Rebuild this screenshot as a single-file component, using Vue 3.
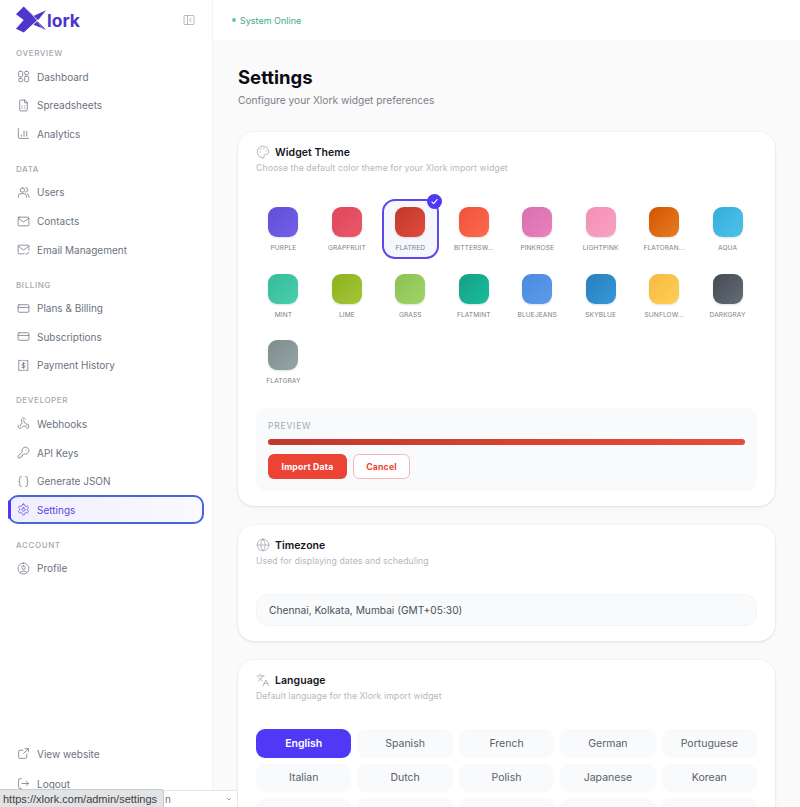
<template>
  <div class="app">
    <aside class="sidebar">
      <div class="brand">
        <svg class="logo" viewBox="0 0 33 28" width="32" height="28">
          <polygon points="1,8 9,0 23,14 9,27 1,23 9,14" fill="#4f35c9" />
          <polygon points="19,10 32,4 24,14" fill="#4f35c9" />
          <polygon points="23,15 32,24 19,19" fill="#4f35c9" />
          <path d="M14 3 30 25" stroke="#c9c4f2" stroke-width=".6" />
        </svg>
        <span class="brand-name">lork</span>
        <svg class="collapse" viewBox="0 0 24 24" width="12" height="12">
          <path v-for="d in icons.collapse" :key="d" :d="d" />
        </svg>
      </div>

      <section v-for="group in nav" :key="group.title" class="group">
        <div class="group-title">{{ group.title }}</div>
        <div v-for="item in group.items" :key="item.label" class="nav-item" :class="{ active: item.active }">
          <svg viewBox="0 0 24 24" width="13" height="13">
            <path v-for="d in icons[item.icon]" :key="d" :d="d" />
          </svg>
          <span>{{ item.label }}</span>
        </div>
      </section>

      <div class="sidebar-bottom">
        <div v-for="item in bottomNav" :key="item.label" class="nav-item">
          <svg viewBox="0 0 24 24" width="13" height="13">
            <path v-for="d in icons[item.icon]" :key="d" :d="d" />
          </svg>
          <span>{{ item.label }}</span>
        </div>
      </div>
    </aside>

    <div class="main">
      <header class="topbar">
        <span class="dot"></span>
        <span>System Online</span>
      </header>

      <div class="content">
        <h1>Settings</h1>
        <p class="subtitle">Configure your Xlork widget preferences</p>

        <section class="card">
          <div class="card-title">
            <svg viewBox="0 0 24 24" width="14" height="14"><path v-for="d in icons.palette" :key="d" :d="d" /></svg>
            <span>Widget Theme</span>
          </div>
          <p class="card-sub">Choose the default color theme for your Xlork import widget</p>

          <div class="themes">
            <div v-for="theme in themes" :key="theme.name" class="theme" :class="{ selected: theme.selected }">
              <div class="swatch" :style="{ background: `linear-gradient(135deg, ${theme.from}, ${theme.to})` }"></div>
              <div class="theme-name">{{ theme.name }}</div>
              <span v-if="theme.selected" class="check">
                <svg viewBox="0 0 24 24" width="9" height="9"><path d="M5 13l4.5 4.5L19 7" /></svg>
              </span>
            </div>
          </div>

          <div class="preview">
            <div class="preview-label">PREVIEW</div>
            <div class="preview-bar"></div>
            <div class="preview-actions">
              <button class="btn-import">Import Data</button>
              <button class="btn-cancel">Cancel</button>
            </div>
          </div>
        </section>

        <section class="card">
          <div class="card-title">
            <svg viewBox="0 0 24 24" width="14" height="14"><path v-for="d in icons.globe" :key="d" :d="d" /></svg>
            <span>Timezone</span>
          </div>
          <p class="card-sub">Used for displaying dates and scheduling</p>
          <div class="select">Chennai, Kolkata, Mumbai (GMT+05:30)</div>
        </section>

        <section class="card">
          <div class="card-title">
            <svg viewBox="0 0 24 24" width="14" height="14"><path v-for="d in icons.languages" :key="d" :d="d" /></svg>
            <span>Language</span>
          </div>
          <p class="card-sub">Default language for the Xlork import widget</p>
          <div class="languages">
            <div v-for="lang in languages" :key="lang" class="lang" :class="{ current: lang === 'English' }">{{ lang }}</div>
            <!-- third row, only its top edge is on screen -->
            <div v-for="n in 5" :key="n" class="lang"></div>
          </div>
        </section>
      </div>
    </div>

    <!-- bar behind the browser's link preview, only its last letter shows -->
    <div class="bottom-select">
      <span class="bottom-label">n</span>
      <svg viewBox="0 0 24 24" width="8" height="8"><path d="M6 9l6 6 6-6" /></svg>
    </div>
    <div class="link-preview">https://xlork.com/admin/settings</div>
  </div>
</template>

<script setup>
const rr = (x, y, w, h, r) =>
  `M${x + r} ${y}h${w - 2 * r}a${r} ${r} 0 0 1 ${r} ${r}v${h - 2 * r}a${r} ${r} 0 0 1 -${r} ${r}h-${w - 2 * r}a${r} ${r} 0 0 1 -${r} -${r}v-${h - 2 * r}a${r} ${r} 0 0 1 ${r} -${r}z`

const icons = {
  collapse: [rr(2, 3, 20, 18, 2), 'M9 3v18', 'M17 8l-4 4 4 4'],
  dashboard: [rr(3, 2.5, 7.5, 10, 2), rr(14, 2.5, 7.5, 6, 2.5), rr(3, 15.5, 7.5, 6, 2.5), rr(14, 11.5, 7.5, 10, 2)],
  sheet: [
    'M14 2H7a2 2 0 0 0-2 2v16a2 2 0 0 0 2 2h10a2 2 0 0 0 2-2V7z',
    'M14 2v5h5',
    'M9 13h.9M14 13h.9M9 17h.9M14 17h.9',
  ],
  chart: ['M2.5 3v16a2 2 0 0 0 2 2h17', 'M8 17v-2', 'M13 17V7', 'M18 17v-9'],
  users: [
    'M10 3.5a4 4 0 1 0 0 8 4 4 0 0 0 0-8z',
    'M2.5 21v-2a5 5 0 0 1 5-5h5a5 5 0 0 1 5 5v2',
    'M16 3.2a4 4 0 0 1 0 8',
    'M19 14.3a5 5 0 0 1 3 4.7v2',
  ],
  mail: [rr(2, 4, 20, 16, 2), 'M2.5 6l9.5 7 9.5-7'],
  mailCheck: ['M22 13V6a2 2 0 0 0-2-2H4a2 2 0 0 0-2 2v12a2 2 0 0 0 2 2h9', 'M2.5 6l9.5 7 9.5-7', 'M16 19l2 2 4-4'],
  card: [rr(2, 5, 20, 14, 2), 'M2 10h20'],
  receipt: [
    'M4 2.5l2 1 2-1 2 1 2-1 2 1 2-1 2 1 2-1v19l-2-1-2 1-2-1-2 1-2-1-2 1-2-1-2 1z',
    'M15 8.5h-4.2a1.7 1.7 0 0 0 0 3.5h2.4a1.7 1.7 0 0 1 0 3.5H9',
    'M12 6.5v11',
  ],
  webhook: [
    'M18 16.98h-5.99c-1.1 0-1.95.94-2.48 1.9A4 4 0 0 1 2 17c.01-.7.2-1.4.57-2',
    'm6 17 3.13-5.78c.53-.97.1-2.18-.5-3.1a4 4 0 1 1 6.89-4.06',
    'm12 6 3.13 5.73C15.66 12.7 16.9 13 18 13a4 4 0 0 1 0 8',
  ],
  key: [
    'M2.586 17.414A2 2 0 0 0 2 18.828V21a1 1 0 0 0 1 1h3a1 1 0 0 0 1-1v-1a1 1 0 0 1 1-1h1a1 1 0 0 0 1-1v-1a1 1 0 0 1 1-1h.172a2 2 0 0 0 1.414-.586l.814-.814a6.5 6.5 0 1 0-4-4z',
    'M16.5 7.5h.01',
  ],
  braces: [
    'M8 3H7a2 2 0 0 0-2 2v5a2 2 0 0 1-2 2 2 2 0 0 1 2 2v5c0 1.1.9 2 2 2h1',
    'M16 21h1a2 2 0 0 0 2-2v-5c0-1.1.9-2 2-2a2 2 0 0 1-2-2V5a2 2 0 0 0-2-2h-1',
  ],
  settings: [
    'M12.22 2h-.44a2 2 0 0 0-2 2v.18a2 2 0 0 1-1 1.73l-.43.25a2 2 0 0 1-2 0l-.15-.08a2 2 0 0 0-2.73.73l-.22.38a2 2 0 0 0 .73 2.73l.15.1a2 2 0 0 1 1 1.72v.51a2 2 0 0 1-1 1.74l-.15.09a2 2 0 0 0-.73 2.73l.22.38a2 2 0 0 0 2.73.73l.15-.08a2 2 0 0 1 2 0l.43.25a2 2 0 0 1 1 1.73V20a2 2 0 0 0 2 2h.44a2 2 0 0 0 2-2v-.18a2 2 0 0 1 1-1.73l.43-.25a2 2 0 0 1 2 0l.15.08a2 2 0 0 0 2.73-.73l.22-.39a2 2 0 0 0-.73-2.73l-.15-.08a2 2 0 0 1-1-1.74v-.5a2 2 0 0 1 1-1.74l.15-.09a2 2 0 0 0 .73-2.73l-.22-.38a2 2 0 0 0-2.73-.73l-.15.08a2 2 0 0 1-2 0l-.43-.25a2 2 0 0 1-1-1.73V4a2 2 0 0 0-2-2z',
    'M12 9a3 3 0 1 0 0 6 3 3 0 0 0 0-6z',
  ],
  profile: [
    'M12 2a10 10 0 1 0 0 20 10 10 0 0 0 0-20z',
    'M12 7a3.2 3.2 0 1 0 0 6.4A3.2 3.2 0 0 0 12 7z',
    'M6 19.5a6.5 5 0 0 1 12 0',
  ],
  external: ['M21 3l-9 9', 'M15 3h6v6', 'M18 13v6a2 2 0 0 1-2 2H5a2 2 0 0 1-2-2V8a2 2 0 0 1 2-2h6'],
  logout: ['M8 21H4.5a1.5 1.5 0 0 1-1.5-1.5v-15A1.5 1.5 0 0 1 4.5 3H8', 'M17 16l4-4-4-4', 'M21 12H9'],
  palette: [
    'M12 22a10 10 0 1 1 10-10c0 2.5-2 4-4 4h-2.5a1.8 1.8 0 0 0-1.3 3c.8 1 .2 3-2.2 3z',
    'M13 6h1',
    'M17 10h1',
    'M8 7h1',
    'M6 12h1',
  ],
  globe: [
    'M12 2a10 10 0 1 0 0 20 10 10 0 0 0 0-20z',
    'M12 2a14.5 14.5 0 0 0 0 20 14.5 14.5 0 0 0 0-20',
    'M2 12h20',
  ],
  languages: ['m5 8 6 6', 'm4 14 6-6 2-3', 'M2 5h12', 'M7 2h1', 'm22 22-5-10-5 10', 'M14 18h6'],
}

const nav = [
  {
    title: 'OVERVIEW',
    items: [
      { label: 'Dashboard', icon: 'dashboard' },
      { label: 'Spreadsheets', icon: 'sheet' },
      { label: 'Analytics', icon: 'chart' },
    ],
  },
  {
    title: 'DATA',
    items: [
      { label: 'Users', icon: 'users' },
      { label: 'Contacts', icon: 'mail' },
      { label: 'Email Management', icon: 'mailCheck' },
    ],
  },
  {
    title: 'BILLING',
    items: [
      { label: 'Plans & Billing', icon: 'card' },
      { label: 'Subscriptions', icon: 'card' },
      { label: 'Payment History', icon: 'receipt' },
    ],
  },
  {
    title: 'DEVELOPER',
    items: [
      { label: 'Webhooks', icon: 'webhook' },
      { label: 'API Keys', icon: 'key' },
      { label: 'Generate JSON', icon: 'braces' },
      { label: 'Settings', icon: 'settings', active: true },
    ],
  },
  {
    title: 'ACCOUNT',
    items: [{ label: 'Profile', icon: 'profile' }],
  },
]

const bottomNav = [
  { label: 'View website', icon: 'external' },
  { label: 'Logout', icon: 'logout' },
]

const themes = [
  { name: 'PURPLE', from: '#5f4fd8', to: '#7460e8' },
  { name: 'GRAPFRUIT', from: '#e0465a', to: '#e9586c' },
  { name: 'FLATRED', from: '#c0392b', to: '#e04b3a', selected: true },
  { name: 'BITTERSW...', from: '#f0503c', to: '#fd6c4e' },
  { name: 'PINKROSE', from: '#d870ae', to: '#ea80bf' },
  { name: 'LIGHTPINK', from: '#f390b6', to: '#f9a0c2' },
  { name: 'FLATORAN...', from: '#d35400', to: '#e67e22' },
  { name: 'AQUA', from: '#34aedb', to: '#4fc1e9' },
  { name: 'MINT', from: '#37bc9b', to: '#48cfad' },
  { name: 'LIME', from: '#8cb21c', to: '#a4c639' },
  { name: 'GRASS', from: '#8cc152', to: '#a0d468' },
  { name: 'FLATMINT', from: '#16a085', to: '#1abc9c' },
  { name: 'BLUEJEANS', from: '#4a89dc', to: '#5d9cec' },
  { name: 'SKYBLUE', from: '#2980b9', to: '#3498db' },
  { name: 'SUNFLOW...', from: '#f6bb42', to: '#ffce54' },
  { name: 'DARKGRAY', from: '#434a54', to: '#656d78' },
  { name: 'FLATGRAY', from: '#7f8c8d', to: '#95a5a6' },
]

const languages = [
  'English', 'Spanish', 'French', 'German', 'Portuguese',
  'Italian', 'Dutch', 'Polish', 'Japanese', 'Korean',
]
</script>

<style>
html, body {
  margin: 0;
  background: #fafafa;
}
</style>

<style scoped>
.app {
  position: relative;
  display: flex;
  width: 800px;
  height: 807px;
  overflow: hidden;
  font-family: Inter, "Noto Sans", sans-serif;
  color: #6b7280;
}

.sidebar {
  width: 213px;
  flex: none;
  box-sizing: border-box;
  display: flex;
  flex-direction: column;
  padding: 6px 8px 9px;
  background: #fff;
  border-right: 1px solid #f1f2f4;
}

.brand {
  display: flex;
  align-items: center;
  height: 28px;
  padding: 0 9px 0 7px;
  margin-bottom: 12px;
}

.brand-name {
  font-size: 17.5px;
  font-weight: 700;
  color: #4f35c9;
}

.logo {
  flex: none;
}

.collapse {
  margin-left: auto;
  fill: none;
  stroke: #9ca3af;
  stroke-width: 1.5;
}

.group {
  margin-bottom: 13.6px;
}

.group-title {
  height: 14px;
  line-height: 14px;
  padding-left: 8px;
  margin-bottom: 2.4px;
  font-size: 8px;
  font-weight: 500;
  letter-spacing: .6px;
  color: #a3a8b1;
}

.nav-item {
  position: relative;
  display: flex;
  align-items: center;
  gap: 7px;
  box-sizing: border-box;
  height: 28.6px;
  padding-left: 9px;
  font-size: 10px;
  color: #6b7280;
}

.nav-item svg {
  flex: none;
  fill: none;
  stroke: #6b7280;
  stroke-width: 1.4;
  stroke-linecap: round;
  stroke-linejoin: round;
}

.nav-item.active {
  border: 2px solid #4766dc;
  border-radius: 10px;
  padding-left: 7px;
  color: #5a45e0;
  background: linear-gradient(90deg, #f0eefe, #faf9ff);
}

.nav-item.active::before {
  content: "";
  position: absolute;
  left: -2px;
  top: 3px;
  bottom: 3px;
  width: 3px;
  border-radius: 2px;
  background: #4f39f6;
}

.nav-item.active svg {
  stroke: #5a45e0;
}

.sidebar-bottom {
  margin-top: auto;
  display: flex;
  flex-direction: column;
  gap: 1.4px;
}

.main {
  flex: 1;
  min-width: 0;
  background: #fafafa;
}

.topbar {
  display: flex;
  align-items: center;
  gap: 4px;
  height: 40px;
  padding-left: 19px;
  background: #fff;
  font-size: 9px;
  color: #3fa884;
}

.dot {
  width: 4px;
  height: 4px;
  border-radius: 50%;
  background: #5fc9a5;
}

.content {
  padding: 26px 25px 0 25px;
}

h1 {
  margin: 0;
  font-size: 18.5px;
  line-height: 22px;
  font-weight: 700;
  color: #0b0d12;
}

.subtitle {
  margin: 5px 0 25px;
  font-size: 10.2px;
  line-height: 14px;
  color: #7b818b;
}

.card {
  padding: 14px 18px 15px;
  margin-bottom: 19px;
  background: #fff;
  border-radius: 16px;
  box-shadow: 0 1px 3px rgba(0, 0, 0, .1), 0 0 0 1px rgba(0, 0, 0, .015);
}

.card-title {
  display: flex;
  align-items: center;
  gap: 5px;
  height: 12px;
  font-size: 10.5px;
  font-weight: 600;
  letter-spacing: .05px;
  color: #14161b;
}

.card-title svg {
  flex: none;
  fill: none;
  stroke: #9ca3af;
  stroke-width: 1.3;
  stroke-linecap: round;
  stroke-linejoin: round;
}

.card-sub {
  margin: 4px 0 0;
  font-size: 8.7px;
  line-height: 12px;
  letter-spacing: .08px;
  color: #b4b8bf;
}

.themes {
  display: grid;
  grid-template-columns: repeat(8, 1fr);
  column-gap: 6.6px;
  row-gap: 6.5px;
  margin: 25px 1px 0 -1px;
}

.theme {
  position: relative;
  box-sizing: border-box;
  height: 60px;
  padding-top: 6px;
  display: flex;
  flex-direction: column;
  align-items: center;
  border: 2px solid transparent;
  border-radius: 13px;
}

.theme.selected {
  border-color: #5b49ee;
  background: #f6f7fc;
}

.swatch {
  width: 30px;
  height: 30px;
  flex: none;
  border-radius: 9px;
  box-shadow: 0 1px 2px rgba(0, 0, 0, .12);
}

.theme-name {
  margin-top: 6px;
  font-size: 6.6px;
  line-height: 10px;
  letter-spacing: .1px;
  white-space: nowrap;
  color: #7c8087;
}

.check {
  position: absolute;
  top: -7px;
  right: -5px;
  width: 15px;
  height: 15px;
  display: flex;
  align-items: center;
  justify-content: center;
  border-radius: 50%;
  background: #4f39f6;
}

.check svg {
  fill: none;
  stroke: #fff;
  stroke-width: 3;
  stroke-linecap: round;
  stroke-linejoin: round;
}

.preview {
  margin-top: 16px;
  padding: 13px 12px 12px;
  background: #f8fafb;
  border-radius: 10px;
}

.preview-label {
  font-size: 8.5px;
  line-height: 11px;
  letter-spacing: .8px;
  color: #a2a7af;
}

.preview-bar {
  height: 6px;
  margin-top: 7px;
  border-radius: 3px;
  background: linear-gradient(90deg, #c0392b, #e74c3c);
}

.preview-actions {
  display: flex;
  gap: 6px;
  margin-top: 9px;
}

.preview-actions button {
  height: 25px;
  font-family: inherit;
  font-size: 8.7px;
  font-weight: 700;
  letter-spacing: .2px;
  border-radius: 6px;
  padding: 0;
}

.btn-import {
  width: 79px;
  color: #fff;
  background: #ec4434;
  border: none;
}

.btn-cancel {
  width: 57px;
  color: #ec4434;
  background: #fff;
  border: 1px solid #f3b9b2;
}

.select {
  display: flex;
  align-items: center;
  height: 32px;
  margin-top: 27px;
  padding-left: 12px;
  background: #f8fafb;
  border: 1px solid #f3f4f6;
  border-radius: 12px;
  box-sizing: border-box;
  font-size: 10.2px;
  color: #4b5058;
}

.languages {
  display: grid;
  grid-template-columns: repeat(5, 1fr);
  gap: 6px;
  margin-top: 27px;
}

.lang {
  display: flex;
  align-items: center;
  justify-content: center;
  height: 28.5px;
  font-size: 10.5px;
  color: #5b6068;
  background: #f8fafb;
  border-radius: 9px;
}

.lang.current {
  color: #fff;
  font-weight: 600;
  background: #4f39f6;
}

.bottom-select {
  position: absolute;
  left: 0;
  bottom: 0;
  width: 238px;
  height: 17px;
  box-sizing: border-box;
  display: flex;
  align-items: center;
  justify-content: flex-end;
  padding-right: 4px;
  background: #fff;
  border-top: 1px solid #e5e7eb;
  border-right: 1px solid #e5e7eb;
}

.bottom-label {
  position: absolute;
  left: 165px;
  font-size: 10px;
  color: #6b7280;
}

.bottom-select svg {
  fill: none;
  stroke: #8a8f96;
  stroke-width: 2.5;
}

.link-preview {
  position: absolute;
  left: 0;
  bottom: 0;
  height: 18px;
  line-height: 18px;
  padding: 0 6px 0 3px;
  box-sizing: border-box;
  width: 164px;
  font-family: "Liberation Sans", Arial, sans-serif;
  font-size: 11px;
  white-space: nowrap;
  color: #3c3f44;
  background: #e2e3e5;
  border-top: 1px solid #c9cacc;
  border-right: 1px solid #c9cacc;
  border-top-right-radius: 3px;
}
</style>
